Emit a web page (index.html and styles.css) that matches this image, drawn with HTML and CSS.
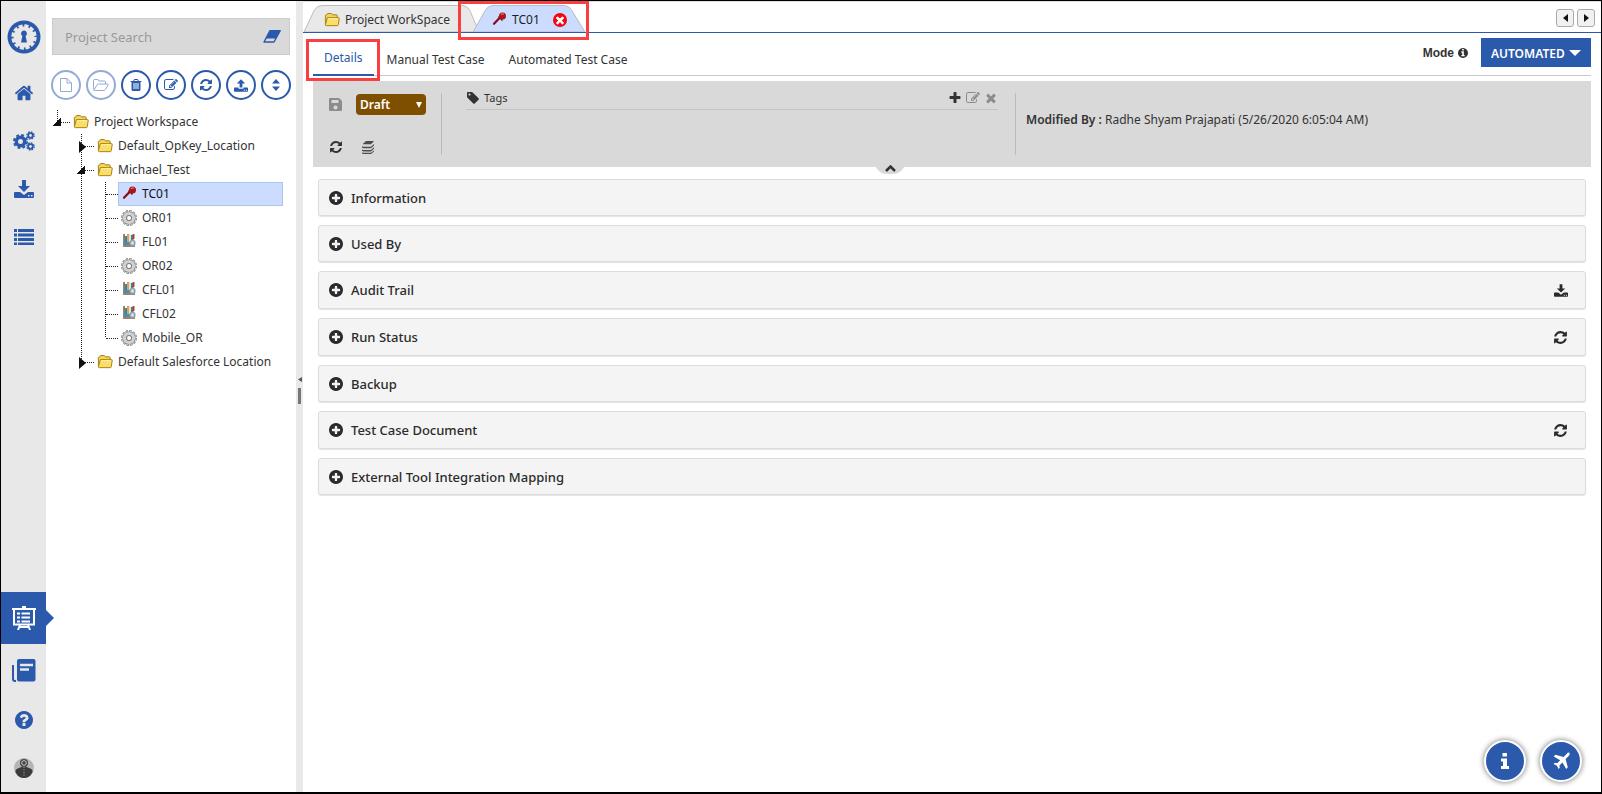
FILE: index.html
```html
<!DOCTYPE html>
<html lang="en">
<head>
<meta charset="utf-8">
<title>Project WorkSpace</title>
<link rel="stylesheet" href="styles.css">
</head>
<body>
<svg class="sprite" aria-hidden="true">
  <symbol id="refresh" viewBox="0 0 1792 1792"><path d="M1639 1056q0 5-1 7-64 268-268 434.500t-478 166.500q-146 0-282.500-55t-243.500-157l-129 129q-19 19-45 19t-45-19-19-45v-448q0-26 19-45t45-19h448q26 0 45 19t19 45-19 45l-137 137q71 66 161 102t187 36q134 0 250-65t186-179q11-17 53-117 8-23 30-23h192q13 0 22.500 9.500t9.500 22.500zm25-800v448q0 26-19 45t-45 19h-448q-26 0-45-19t-19-45 19-45l138-138q-148-137-349-137-134 0-250 65t-186 179q-11 17-53 117-8 23-30 23h-199q-13 0-22.500-9.500t-9.500-22.500v-7q65-268 270-434.500t480-166.500q146 0 284 55.500t245 156.500l130-129q19-19 45-19t45 19 19 45z"/></symbol>
  <symbol id="plus" viewBox="0 0 1792 1792"><path d="M1600 736v192q0 40-28 68t-68 28h-416v416q0 40-28 68t-68 28h-192q-40 0-68-28t-28-68v-416h-416q-40 0-68-28t-28-68v-192q0-40 28-68t68-28h416v-416q0-40 28-68t68-28h192q40 0 68 28t28 68v416h416q40 0 68 28t28 68z"/></symbol>
  <symbol id="plus-circle" viewBox="128 128 1536 1536"><path d="M1344 960v-128q0-26-19-45t-45-19h-256v-256q0-26-19-45t-45-19h-128q-26 0-45 19t-19 45v256h-256q-26 0-45 19t-19 45v128q0 26 19 45t45 19h256v256q0 26 19 45t45 19h128q26 0 45-19t19-45v-256h256q26 0 45-19t19-45zm320-64q0 209-103 385.500t-279.500 279.500-385.500 103-385.500-103-279.500-279.500-103-385.500 103-385.500 279.500-279.500 385.500-103 385.500 103 279.500 279.500 103 385.500z"/></symbol>
  <symbol id="close" viewBox="0 0 1792 1792"><path d="M1490 1322q0 40-28 68l-136 136q-28 28-68 28t-68-28l-294-294-294 294q-28 28-68 28t-68-28l-136-136q-28-28-28-68t28-68l294-294-294-294q-28-28-28-68t28-68l136-136q28-28 68-28t68 28l294 294 294-294q28-28 68-28t68 28l136 136q28 28 28 68t-28 68l-294 294 294 294q28 28 28 68z"/></symbol>
  <symbol id="home" viewBox="0 0 1792 1792"><path d="M1472 992v480q0 26-19 45t-45 19h-384v-384h-256v384h-384q-26 0-45-19t-19-45v-480l1-6 575-474 575 474q1 2 1 6zm223-69l-62 74q-8 9-21 11h-3q-13 0-21-7l-692-577-692 577q-12 8-24 7-13-2-21-11l-62-74q-8-10-7-23.500t11-21.500l719-599q32-26 76-26t76 26l244 204v-195q0-14 9-23t23-9h192q14 0 23 9t9 23v408l219 182q10 8 11 21.500t-7 23.500z"/></symbol>
  <symbol id="edit" viewBox="0 0 1792 1792"><path d="M888 1184l116-116-152-152-116 116v56h96v96h56zm440-720q-16-16-33 1l-350 350q-17 17-1 33t33-1l350-350q17-17 1-33zm80 594v190q0 119-84.500 203.500t-203.500 84.500h-832q-119 0-203.500-84.500t-84.500-203.500v-832q0-119 84.500-203.500t203.500-84.500h832q63 0 117 25 15 7 18 23 3 17-9 29l-49 49q-14 14-32 8-23-6-45-6h-832q-66 0-113 47t-47 113v832q0 66 47 113t113 47h832q66 0 113-47t47-113v-126q0-13 9-22l64-64q15-15 35-7t20 29zm-96-738l288 288-672 672h-288v-288zm444 132l-92 92-288-288 92-92q28-28 68-28t68 28l152 152q28 28 28 68t-28 68z"/></symbol>
  <symbol id="tag" viewBox="0 0 1792 1792"><path d="M576 448q0-53-37.500-90.500t-90.500-37.500-90.500 37.500-37.500 90.500 37.500 90.500 90.500 37.500 90.500-37.500 37.500-90.500zm1067 576q0 53-37 90l-491 492q-39 37-91 37-53 0-90-37l-715-716q-38-37-64.500-101t-26.500-117v-416q0-52 38-90t90-38h416q53 0 117 26.500t102 64.500l715 714q37 39 37 91z"/></symbol>
  <symbol id="trash" viewBox="0 0 1792 1792"><path d="M704 1376v-704q0-14-9-23t-23-9h-64q-14 0-23 9t-9 23v704q0 14 9 23t23 9h64q14 0 23-9t9-23zm256 0v-704q0-14-9-23t-23-9h-64q-14 0-23 9t-9 23v704q0 14 9 23t23 9h64q14 0 23-9t9-23zm256 0v-704q0-14-9-23t-23-9h-64q-14 0-23 9t-9 23v704q0 14 9 23t23 9h64q14 0 23-9t9-23zm-544-992h448l-48-117q-7-9-17-11h-317q-10 2-17 11zm928 32v64q0 14-9 23t-23 9h-96v948q0 83-47 143.500t-113 60.500h-832q-66 0-113-58.500t-47-141.500v-952h-96q-14 0-23-9t-9-23v-64q0-14 9-23t23-9h309l70-167q15-37 54-63t79-26h320q40 0 79 26t54 63l70 167h309q14 0 23 9t9 23z"/></symbol>
  <symbol id="question" viewBox="128 128 1536 1536"><path d="M1024 1376v-192q0-14-9-23t-23-9h-192q-14 0-23 9t-9 23v192q0 14 9 23t23 9h192q14 0 23-9t9-23zm256-672q0-88-55.500-163t-138.500-116-170-41q-243 0-371 213-15 24 8 42l132 100q7 6 19 6 16 0 25-12 53-68 86-92 34-24 86-24 48 0 85.500 26t37.500 59q0 38-20 61t-68 45q-63 28-115.500 86.500t-52.500 125.500v36q0 14 9 23t23 9h192q14 0 23-9t9-23q0-19 21.500-49.500t54.500-49.500q32-18 49-28.500t46-35 44.500-48 28-60.500 12.500-81zm384 192q0 209-103 385.500t-279.500 279.500-385.500 103-385.500-103-279.500-279.500-103-385.500 103-385.500 279.500-279.500 385.500-103 385.500 103 279.500 279.500 103 385.500z"/></symbol>
  <symbol id="info-circle" viewBox="128 128 1536 1536"><path d="M1152 1376v-160q0-14-9-23t-23-9h-96v-512q0-14-9-23t-23-9h-320q-14 0-23 9t-9 23v160q0 14 9 23t23 9h96v320h-96q-14 0-23 9t-9 23v160q0 14 9 23t23 9h448q14 0 23-9t9-23zm-128-896v-160q0-14-9-23t-23-9h-192q-14 0-23 9t-9 23v160q0 14 9 23t23 9h192q14 0 23-9t9-23zm640 416q0 209-103 385.500t-279.500 279.500-385.500 103-385.500-103-279.500-279.500-103-385.500 103-385.500 279.500-279.500 385.500-103 385.500 103 279.500 279.500 103 385.500z"/></symbol>
  <symbol id="info" viewBox="0 0 16 16"><path d="M5.500 0h4.500v3.500h-4.500zM4 5.500h6v7.500h2v3h-8v-3h2v-4.500h-2z"/></symbol>
  <symbol id="download" viewBox="0 0 20 18"><path d="M8 0h4v6h4l-6 6-6-6h4zM1 12h5l4 3 4-3H19a1 1 0 0 1 1 1v4a1 1 0 0 1-1 1H1a1 1 0 0 1-1-1v-4a1 1 0 0 1 1-1zm13 3v1.500h1.500V15zm3 0v1.500h1.500V15z"/></symbol>
  <symbol id="upload" viewBox="0 0 20 18"><path d="M8 12h4V6h4l-6-6-6 6h4zM1 12h5.500v1.500h7V12H19a1 1 0 0 1 1 1v4a1 1 0 0 1-1 1H1a1 1 0 0 1-1-1v-4a1 1 0 0 1 1-1zm13 3v1.500h1.500V15zm3 0v1.500h1.500V15z"/></symbol>
  <symbol id="list" viewBox="0 0 20 16"><path d="M0 0h3v3H0zM4 0h16v3H4zM0 4.500h3v3H0zM4 4.500h16v3H4zM0 9h3v3H0zM4 9h16v3H4zM0 13.500h3v2.500H0zM4 13.500h16v2.500H4z"/></symbol>
  <symbol id="cogs" viewBox="0 0 22 20"><g fill="none" stroke="currentColor"><circle cx="7.500" cy="10.500" r="4.200" stroke-width="3.400"/><circle cx="7.500" cy="10.500" r="6.500" stroke-width="2" stroke-dasharray="2.800 2.305"/><circle cx="17.500" cy="4.500" r="2.300" stroke-width="1.800"/><circle cx="17.500" cy="4.500" r="3.600" stroke-width="1.400" stroke-dasharray="1.600 1.228"/><circle cx="17.500" cy="15.500" r="2.300" stroke-width="1.800"/><circle cx="17.500" cy="15.500" r="3.600" stroke-width="1.400" stroke-dasharray="1.600 1.228"/></g></symbol>
  <symbol id="folder" viewBox="0 0 17 15"><path d="M1.500 12.500V3q0-1 1-1h.5l.8-1.400h4L9 2h4q1 0 1 1v2" fill="#f4d35a" stroke="#a67c10"/><path d="M3.600 5H15.200q1.200 0 1 1l-1 6.500q-.2 1-1 1H2.500q-1 0-1-1z" fill="#f9df68" stroke="#a67c10"/><path d="M4.300 6.200h10.500" stroke="#fff9c8"/></symbol>
  <symbol id="pin" viewBox="-2 0 16 16"><path d="M6.500 6L1 11.800" stroke="#8d0b10" stroke-width="2.200" stroke-linecap="round"/><path d="M5.500 4.500L9.500 8.500" stroke="#8d0b10" stroke-width="1.600"/><circle cx="9.500" cy="4" r="3.500" fill="#a9151b"/><path d="M8 3q1-1.500 3-.8" stroke="#df7076" stroke-width="1.200" fill="none"/></symbol>
  <symbol id="gear" viewBox="0 0 16 16"><circle cx="8" cy="8" r="6.900" fill="none" stroke="#858585" stroke-width="2.200" stroke-dasharray="2.400 1.213"/><circle cx="8" cy="8" r="4.300" fill="none" stroke="#808080" stroke-width="4.600"/><circle cx="8" cy="8" r="4.600" fill="none" stroke="#d2d2d2" stroke-width="3"/><circle cx="8" cy="8" r="6.700" fill="none" stroke="#c4c4c4" stroke-width="1.400" stroke-dasharray="1.200 2.308" stroke-dashoffset="-.6"/></symbol>
  <symbol id="library" viewBox="-2 0 16 16"><path d="M0 0h2v13H0zM0 11h12v2H0z" fill="#a08070"/><path d="M1.500 2h3v9h-3zM8 1h2.500v9H8z" fill="#2f87b5"/><path d="M4 0h2.300v8H4z" fill="#f0a028"/><path d="M6.300 1H8v8H6.300z" fill="#d8e4e8"/><path d="M9.500 0h2v5h-2z" fill="#c03a2c"/><path d="M2.500 8h5v3h-5z" fill="#3c8fc0"/><circle cx="9.500" cy="9" r="2.400" fill="#d5dfe4" stroke="#90a4ae" stroke-width="1.500"/></symbol>
  <symbol id="plane" viewBox="0 0 18 18"><path d="M17.300.7q1 1-.6 3.200L13.600 7l2.200 8.300-1.600 1.600-3.800-6.500-3 3 .4 2.400-1.200 1.200-1.700-3.300L1.600 12l1.200-1.200 2.400.4 3-3L1.700 4.400l1.600-1.600L11.600 5l3-3.100Q16.400-.2 17.300.7z"/></symbol>
</svg>

<div class="app">
  <nav class="rail" aria-label="Main">
    <a class="logo" href="#" aria-label="OpKey"><svg width="34" height="34" viewBox="0 0 34 34"><circle cx="17" cy="17" r="16.500" fill="#2b59ab"/><circle cx="17" cy="17" r="10.500" fill="#e8e8e8"/><circle cx="17" cy="17" r="11.200" fill="none" stroke="#e8e8e8" stroke-width="3" stroke-dasharray="4.200 1.664"/><path d="M17 10.500a3 3 0 0 1 1.600 5.500l1.400 6.500h-6l1.400-6.500A3 3 0 0 1 17 10.500z" fill="#2b59ab"/></svg></a>
    <a href="#" aria-label="Home"><svg class="i20"><use href="#home"/></svg></a>
    <a href="#" aria-label="Settings"><svg width="22" height="20"><use href="#cogs"/></svg></a>
    <a href="#" aria-label="Downloads"><svg width="20" height="18"><use href="#download"/></svg></a>
    <a href="#" aria-label="List"><svg width="20" height="16"><use href="#list"/></svg></a>
    <a class="current" href="#" aria-label="Project board"><svg class="outline" width="24" height="24" viewBox="0 0 24 24"><path d="M0 3h24" stroke-width="2"/><path d="M10 1h4" stroke-width="2"/><path d="M2 3v15.500h20V3" stroke-width="2"/><path d="M5 7.500h3M5 11.500h3M5 15.500h3M9.500 7.500H18M9.500 11.500H18M9.500 15.500H18" stroke-width="2"/><path d="M8 19l-2 5M16 19l2 5M8 21h8" stroke-width="2"/></svg></a>
    <a class="docs" href="#" aria-label="Documents"><svg width="24" height="24" viewBox="0 0 24 24"><path d="M1 7v14q0 2 2 2h1" stroke="#2b59ab" stroke-width="2" fill="none"/><rect x="5" y="1" width="18.500" height="22.500" rx="2"/><path d="M8 7h13M8 11.500h9" stroke="#e8e8e8" stroke-width="2.500"/></svg></a>
    <a class="help" href="#" aria-label="Help"><svg width="18" height="18"><use href="#question"/></svg></a>
    <a class="user" href="#" aria-label="Account"><svg width="20" height="20" viewBox="0 0 20 20"><circle cx="10" cy="10" r="10" fill="#b5b5b5"/><path d="M5 10q5-3 10 0 4 1 3.500 4Q16 20 10 20t-8.500-6Q1 11 5 10z" fill="#3b3b3b"/><circle cx="10" cy="5" r="4" fill="#444"/><circle cx="10" cy="5" r="2.300" fill="none" stroke="#ccc"/><path d="M10 9v10" stroke="#aaa" stroke-dasharray="1 1.500"/></svg></a>
  </nav>

  <aside class="explorer">
    <div class="search">
      <input type="text" placeholder="Project Search" aria-label="Project Search">
      <button type="button" aria-label="Clear search"><svg width="18" height="13" viewBox="0 0 18 13"><path d="M7 .7h10.200L11 12H1z" fill="none" stroke="#2b59ab" stroke-width="1.400" stroke-linejoin="round"/><path d="M7 .5h10.500L13 8.500H2.700z"/></svg></button>
    </div>
    <div class="tools">
      <button type="button" disabled aria-label="New file"><svg class="outline" width="12" height="14" viewBox="0 0 12 14"><path d="M.5.500h6.500l4.500 4.500v8.500h-11zM7 .5V5h4.500"/></svg></button>
      <button type="button" disabled aria-label="New folder"><svg class="outline" width="16" height="12" viewBox="0 0 16 12"><path d="M.5 10V1.500q0-1 1-1h3q1 0 1 1v.5h6q1 0 1 1V5M1 11l3-5q.5-1 1.500-1h9q1.200 0 .6 1l-2.600 4.500q-.5 1-1.500 1h-9.500q-1 0-.5-.8z"/></svg></button>
      <button type="button" aria-label="Delete"><svg class="i14"><use href="#trash"/></svg></button>
      <button type="button" aria-label="Edit"><svg class="i14"><use href="#edit"/></svg></button>
      <button type="button" aria-label="Refresh"><svg class="i14"><use href="#refresh"/></svg></button>
      <button type="button" aria-label="Upload"><svg width="14" height="13"><use href="#upload"/></svg></button>
      <button type="button" aria-label="Sort"><svg width="8" height="12" viewBox="0 0 8 12"><path d="M4 0l4 4.500H0zM4 12l4-4.500H0z"/></svg></button>
    </div>
    <ul class="tree">
      <li><span class="node open root"></span><a class="label" href="#"><svg class="icon"><use href="#folder"/></svg>Project Workspace</a></li>
      <li><span class="gap"></span><span class="node shut line"></span><a class="label" href="#"><svg class="icon"><use href="#folder"/></svg>Default_OpKey_Location</a></li>
      <li><span class="gap"></span><span class="node open line"></span><a class="label" href="#"><svg class="icon"><use href="#folder"/></svg>Michael_Test</a></li>
      <li><span class="gap"></span><span class="gap line"></span><span class="node line"></span><a class="label selected" href="#"><svg class="icon"><use href="#pin"/></svg>TC01</a></li>
      <li><span class="gap"></span><span class="gap line"></span><span class="node line"></span><a class="label" href="#"><svg class="icon"><use href="#gear"/></svg>OR01</a></li>
      <li><span class="gap"></span><span class="gap line"></span><span class="node line"></span><a class="label" href="#"><svg class="icon"><use href="#library"/></svg>FL01</a></li>
      <li><span class="gap"></span><span class="gap line"></span><span class="node line"></span><a class="label" href="#"><svg class="icon"><use href="#gear"/></svg>OR02</a></li>
      <li><span class="gap"></span><span class="gap line"></span><span class="node line"></span><a class="label" href="#"><svg class="icon"><use href="#library"/></svg>CFL01</a></li>
      <li><span class="gap"></span><span class="gap line"></span><span class="node line"></span><a class="label" href="#"><svg class="icon"><use href="#library"/></svg>CFL02</a></li>
      <li><span class="gap"></span><span class="gap line"></span><span class="node line last"></span><a class="label" href="#"><svg class="icon"><use href="#gear"/></svg>Mobile_OR</a></li>
      <li><span class="gap"></span><span class="node shut line last"></span><a class="label" href="#"><svg class="icon"><use href="#folder"/></svg>Default Salesforce Location</a></li>
    </ul>
  </aside>

  <div class="splitter"><svg width="4" height="5" viewBox="0 0 4 5"><path d="M4 0v5L0 2.500z"/></svg><span class="grip"></span></div>

  <main class="content">
    <header class="tabs">
      <a class="tab" href="#"><svg class="shape" viewBox="0 0 176 28" preserveAspectRatio="none"><path d="M1 28L11 6Q14 .5 20 .5H158Q164 .5 167 6L176 28z" fill="#e9e9e9" stroke="#bbb"/></svg><svg class="icon"><use href="#folder"/></svg><span>Project WorkSpace</span></a>
      <div class="tab active"><svg class="shape" viewBox="0 0 112 28" preserveAspectRatio="none"><path d="M0 28L12 6Q15 .5 21 .5H90Q96 .5 99 6L112 28z" fill="#cbdcff" stroke="#b5b9c4"/></svg><svg class="icon"><use href="#pin"/></svg><span>TC01</span><button class="close" type="button" aria-label="Close TC01"><svg width="12" height="12"><use href="#close"/></svg></button></div>
      <div class="pager">
        <button type="button" aria-label="Previous tab"><svg width="5" height="8" viewBox="0 0 5 8"><path d="M5 0v8L0 4z"/></svg></button>
        <button type="button" aria-label="Next tab"><svg width="5" height="8" viewBox="0 0 5 8"><path d="M0 0v8l5-4z"/></svg></button>
      </div>
    </header>

    <div class="page">
      <div class="subnav">
        <a class="sub active" href="#">Details</a>
        <a class="sub" href="#">Manual Test Case</a>
        <a class="sub" href="#">Automated Test Case</a>
        <div class="mode">
          <label for="mode">Mode</label><svg width="10" height="10"><use href="#info-circle"/></svg>
          <span class="select-box"><select id="mode"><option>AUTOMATED</option></select><svg width="12" height="6" viewBox="0 0 12 6"><path d="M0 0h12L6 6z"/></svg></span>
        </div>
      </div>

      <section class="panel">
        <div class="actions">
          <button type="button" disabled aria-label="Save"><svg width="13" height="13" viewBox="0 0 13 13"><path fill-rule="evenodd" d="M1 0h9l3 3v9q0 1-1 1H1q-1 0-1-1V1q0-1 1-1zm1.500 2v3h7V2zm4 5.500a2 2 0 1 0 .1 0z"/></svg></button>
          <span class="status"><select aria-label="Status"><option>Draft</option></select><svg width="6" height="6" viewBox="0 0 6 6"><path d="M0 0h6L3 6z"/></svg></span>
          <button type="button" aria-label="Refresh"><svg class="i14"><use href="#refresh"/></svg></button>
          <button type="button" aria-label="Versions"><svg width="12" height="13" viewBox="0 0 12 13"><path d="M4 0h8L9 3.200H0.500zM0 5l1 .7h8L12 3v1.400L9 7.300H1.500L0 6.400zM0 8.300l1 .7h8l3-2.700v1.400l-3 2.900H1.500L0 9.700zM0 11.300l1 .4h8l3-2.300v1L9 13H1.500L0 12.500z" opacity=".85"/></svg></button>
        </div>
        <div class="tags">
          <div class="tags-head"><svg class="i14"><use href="#tag"/></svg><span>Tags</span>
            <button type="button" class="first" aria-label="Add tag"><svg class="i14"><use href="#plus"/></svg></button>
            <button type="button" disabled aria-label="Edit tag"><svg class="i14"><use href="#edit"/></svg></button>
            <button type="button" disabled aria-label="Remove tag"><svg class="i14"><use href="#close"/></svg></button>
          </div>
        </div>
        <p class="modified"><b>Modified By :</b> Radhe Shyam Prajapati (5/26/2020 6:05:04 AM)</p>
        <button class="collapse" type="button" aria-label="Collapse"><svg width="11" height="7" viewBox="0 0 11 7"><path d="M1 6l4.500-4.500L10 6" fill="none" stroke="#333" stroke-width="2.500"/></svg></button>
      </section>

      <div class="sections">
        <section class="bar"><button type="button"><svg class="i14"><use href="#plus-circle"/></svg>Information</button></section>
        <section class="bar"><button type="button"><svg class="i14"><use href="#plus-circle"/></svg>Used By</button></section>
        <section class="bar tall"><button type="button"><svg class="i14"><use href="#plus-circle"/></svg>Audit Trail</button><button type="button" aria-label="Download audit trail"><svg width="14" height="13"><use href="#download"/></svg></button></section>
        <section class="bar tall"><button type="button"><svg class="i14"><use href="#plus-circle"/></svg>Run Status</button><button type="button" aria-label="Refresh run status"><svg class="i15"><use href="#refresh"/></svg></button></section>
        <section class="bar"><button type="button"><svg class="i14"><use href="#plus-circle"/></svg>Backup</button></section>
        <section class="bar tall"><button type="button"><svg class="i14"><use href="#plus-circle"/></svg>Test Case Document</button><button type="button" aria-label="Refresh test case document"><svg class="i15"><use href="#refresh"/></svg></button></section>
        <section class="bar"><button type="button"><svg class="i14"><use href="#plus-circle"/></svg>External Tool Integration Mapping</button></section>
      </div>
    </div>
  </main>
</div>
<div class="floating">
  <button type="button" aria-label="Information"><svg width="16" height="16"><use href="#info"/></svg></button>
  <button type="button" aria-label="Tour"><svg width="18" height="18"><use href="#plane"/></svg></button>
</div>
</body>
</html>
```
FILE: styles.css
```css
* { box-sizing: border-box; }
body { margin: 0; font: 12px/20px "Noto Sans", "Open Sans", sans-serif; color: #333; background: #fff; }
button, select, input { font: inherit; color: inherit; margin: 0; }
button { border: 0; padding: 0; background: none; display: flex; align-items: center; }
a { color: inherit; text-decoration: none; }
svg { fill: currentColor; flex: none; display: block; }
svg.outline { fill: none; stroke: currentColor; }
.sprite { position: absolute; width: 0; height: 0; }
.i14 { width: 14px; height: 14px; }
.i15 { width: 15px; height: 15px; }
.i20 { width: 20px; height: 20px; }
.icon { width: 16px; height: 16px; }

.app { display: grid; grid-template-columns: 45px 250px 7px 1fr; min-height: 100vh; border: 1px solid #000; border-bottom-width: 2px; }

.rail { display: flex; flex-direction: column; background: #e8e8e8; color: #2b59ab; padding-top: 11px; }
.rail a { display: flex; align-items: center; justify-content: center; height: 48px; }
.rail .logo { height: 50px; margin-bottom: 7px; }
.rail .current { position: relative; background: #2b59ab; color: #fff; height: 52px; margin-top: auto; }
.rail .current::after { content: ""; position: absolute; left: 100%; border: 8px solid transparent; border-left-color: #2b59ab; border-right: 0; }
.rail .docs { height: 52px; }

.explorer { padding: 17px 6px 0 6px; }
.search { display: flex; align-items: center; height: 37px; background: #d9d9d9; border: 1px solid #ccc; padding: 0 8px 0 12px; color: #2b59ab; }
.search input { flex: 1; min-width: 0; border: 0; background: none; padding: 0; color: #333; font-size: 13px; outline: 0; }
.search input::placeholder { color: #999; opacity: 1; }
.tools { display: flex; justify-content: space-between; margin: 15px -1px 0; }
.tools button { width: 30px; height: 30px; border: 2px solid #2b59ab; border-radius: 50%; justify-content: center; color: #2b59ab; background: #fff; }
.tools button:disabled { opacity: .5; }
.tree { list-style: none; margin: 10px 0 0; padding: 0 7px 0 5px; }
.tree li { display: flex; height: 24px; }
.gap { width: 24px; flex: none; }
.line { background: repeating-linear-gradient(#222 0 1px, transparent 1px 2px) 0 0 / 1px 100% no-repeat; }
.line.last { background-size: 1px 50%; }
.root { background: repeating-linear-gradient(#222 0 1px, transparent 1px 2px) 0 0 / 1px 50% no-repeat; }
.node { position: relative; width: 13px; flex: none; }
.node::before { content: ""; position: absolute; left: 1px; right: 0; top: 12px; border-top: 1px dotted #222; }
.node.open::after { content: ""; position: absolute; left: -4px; top: 8px; width: 8px; height: 8px; background: linear-gradient(135deg, transparent 50%, #111 50%); }
.node.shut::after { content: ""; position: absolute; left: -2px; top: 7px; border: 6px solid transparent; border-left: 7px solid #111; border-right: 0; }
.label { display: flex; align-items: center; gap: 5px; padding-left: 3px; white-space: nowrap; }
.label.selected { flex: 1; background: #cbdcff; border: 1px solid #a9c5f2; padding-left: 2px; color: #111; }

.splitter { background: #e9e9e9; display: flex; flex-direction: column; align-items: center; gap: 6px; padding-top: 376px; color: #555; }
.grip { width: 3px; height: 16px; background: #777; }

.content { min-width: 0; }
.tabs { display: flex; align-items: flex-end; height: 32px; border-top: 1px solid #ddd; border-bottom: 1px solid #2b59ab; }
.tab { position: relative; display: flex; align-items: center; gap: 5px; width: 176px; height: 27px; padding: 2px 0 0 21px; }
.tab > * { position: relative; }
.tab .shape { position: absolute; inset: 0; width: 100%; height: 100%; }
.tab.active { width: 112px; margin-left: -6px; padding-left: 18px; gap: 5px; color: #222; }
.tab.active::after { content: ""; position: absolute; inset: -4px -4px -8px -15px; border: 3px solid #f93f3f; z-index: 1; pointer-events: none; }
.close { width: 14px; height: 14px; margin-left: 8px; justify-content: center; border-radius: 50%; background: #f40612; color: #fff; }
.pager { display: flex; gap: 3px; margin: 0 6px 5px auto; }
.pager button { width: 18px; height: 18px; border: 1px solid #aaa; border-radius: 3px; justify-content: center; background: #f1f1f1; color: #111; }

.page { padding: 0 10px; }
.subnav { display: flex; height: 43px; border-bottom: 1px solid #c8c8c8; }
.sub { display: flex; align-items: center; padding-top: 11px; margin-right: 24px; }
.sub.active { position: relative; padding: 9px 11px 0; margin: 0 13px -1px 0; border-bottom: 2px solid #2b59ab; color: #2b59ab; }
.sub.active::after { content: ""; position: absolute; inset: 6px -6px -7px -7px; border: 3px solid #f93f3f; pointer-events: none; }
.mode { display: flex; margin: 5px 0 0 auto; height: 29px; align-items: center; }
.mode label { font: bold 12px/20px "Liberation Sans", sans-serif; margin-right: 4px; }
.select-box { display: grid; align-items: center; margin-left: 13px; width: 110px; height: 29px; background: #2b59ab; color: #fff; }
.select-box > *, .status > * { grid-area: 1 / 1; }
.select-box svg { justify-self: end; margin-right: 10px; pointer-events: none; }
select { appearance: none; border: 0; background: none; outline: 0; }
.select-box select { height: 29px; padding: 2px 0 0 10px; font-weight: 600; }

.panel { position: relative; display: flex; align-items: flex-start; background: #d9d9d9; height: 86px; margin-top: 5px; padding-top: 12px; }
.actions { display: grid; grid-template-columns: 27px 84px; grid-template-rows: 23px 62px; height: 62px; padding-left: 16px; width: 129px; align-items: center; border-right: 1px solid #bbb; }
.actions button { color: #333; }
.actions button:disabled, .tags button:disabled { color: #8c8c8c; }
.status { display: grid; align-items: center; width: 70px; height: 21px; border-radius: 4px; background: #7f4f00; color: #fff; }
.status select { height: 21px; padding: 0 4px; font-weight: 600; }
.status svg { justify-self: end; margin-right: 4px; pointer-events: none; }
.actions button:nth-of-type(3) { margin-left: 6px; }
.tags { width: 574px; height: 62px; padding: 0 17px 0 24px; border-right: 1px solid #bbb; }
.tags-head { display: flex; align-items: center; height: 17px; padding-bottom: 6px; border-bottom: 1px solid #c4c4c4; gap: 4px; font-size: 11px; }
.tags-head .first { margin-left: auto; }
.modified { margin: 17px 0 0 10px; }
.modified b { font-weight: 600; }
.collapse { position: absolute; left: 562px; top: 81px; width: 30px; height: 12px; border-radius: 0 0 15px 15px; background: #d9d9d9; justify-content: center; }

.sections { display: flex; flex-direction: column; gap: 9px; padding: 12px 5px 0; }
.bar { display: flex; justify-content: space-between; min-height: 37px; padding: 0 17px 0 10px; border: 1px solid #dcdcdc; border-radius: 3px; background: #f4f4f4; box-shadow: 0 1px 1px #e4e4e4; }
.bar.tall { min-height: 38px; }
.bar button { gap: 8px; font-size: 13px; font-weight: 500; color: #2b2b2b; }

.floating { position: fixed; right: 20px; bottom: 12px; display: flex; gap: 14px; }
.floating button { width: 42px; height: 42px; border: 2px solid #fff; border-radius: 50%; background: #2b59ab; color: #fff; justify-content: center; box-shadow: 0 0 5px 1px #999; }
```
